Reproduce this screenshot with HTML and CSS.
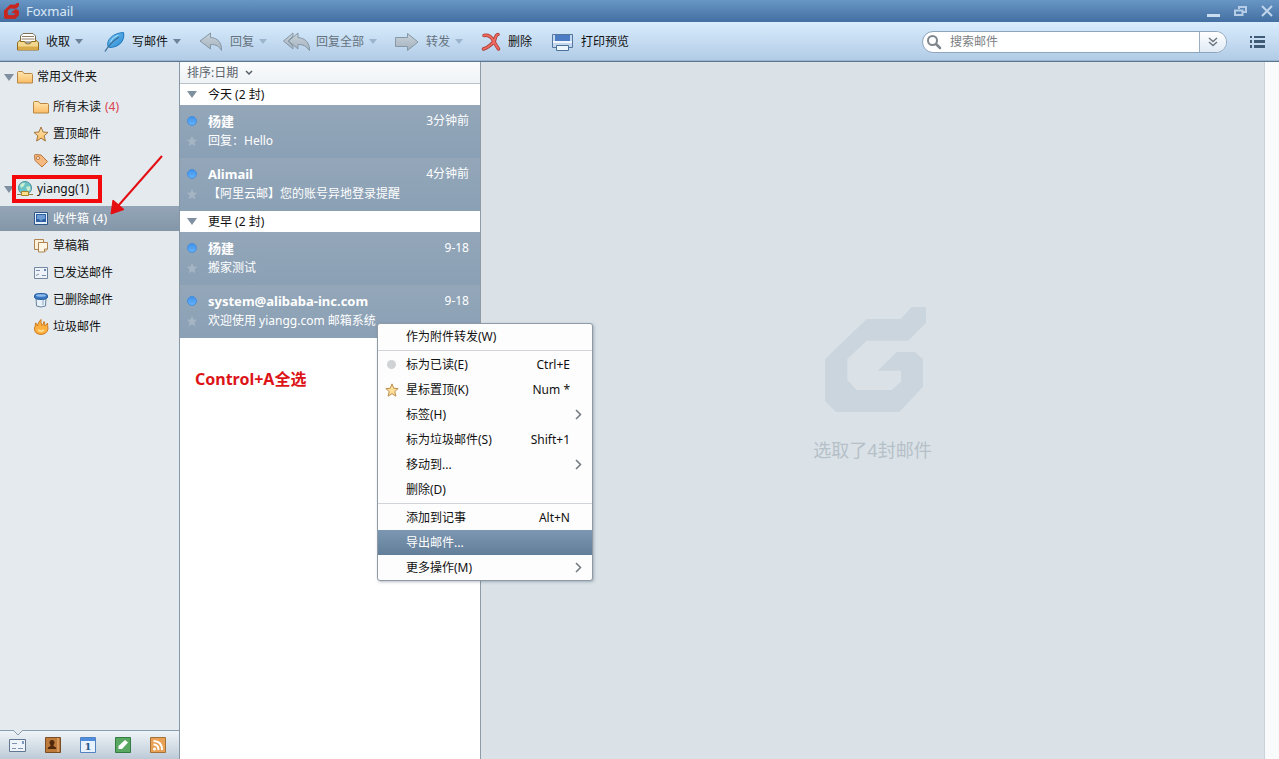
FILE: index.html
```html
<!DOCTYPE html>
<html lang="zh-CN">
<head>
<meta charset="utf-8">
<title>Foxmail</title>
<link rel="stylesheet" href="styles.css">
</head>
<body>
<svg class="defs" width="0" height="0" aria-hidden="true">
  <defs>
    <linearGradient id="gold" x1="0" y1="0" x2="0" y2="1"><stop offset="0" stop-color="#ffe6b0"/><stop offset="1" stop-color="#f9bd66"/></linearGradient>
    <linearGradient id="grey" x1="0" y1="0" x2="0" y2="1"><stop offset="0" stop-color="#c9d2d9"/><stop offset="1" stop-color="#a3b1be"/></linearGradient>
    <linearGradient id="feather" x1="0" y1="0" x2="1" y2="1"><stop offset="0" stop-color="#7cc8f5"/><stop offset="1" stop-color="#2385cf"/></linearGradient>
    <linearGradient id="dot" x1="0" y1="0" x2="0" y2="1"><stop offset="0" stop-color="#3f90ea"/><stop offset="1" stop-color="#66b4fb"/></linearGradient>
    <symbol id="star" viewBox="0 0 16 16"><path d="M8 1l2 5 5 .4-3.800 3.400L12.400 15 8 12.200 3.600 15l1.200-5.200L1 6.400 6 6z"/></symbol>
    <symbol id="folder" viewBox="0 0 16 14"><path d="M.5 13V2.500q0-1 1-1h4l1.500 2h7.500q1 0 1 1V13z" fill="url(#gold)" stroke="#b98743"/></symbol>
    <symbol id="unread" viewBox="0 0 12 12"><circle cx="6" cy="6" r="4.500" fill="url(#dot)" stroke="#4a8ed8"/></symbol>
  </defs>
</svg>
<div class="app">
  <header class="titlebar">
    <svg class="brand" viewBox="75 51 303 315"><path fill="#c8261f" stroke="#c8261f" stroke-width="16" d="M200 87H303L335 51H378V98L325 152H200L142 207V270L170 300H275L303 275V242H233L290 186H345L369 208V290L298 366H108L75 333V207Z"/></svg>
    <h1>Foxmail</h1>
    <div class="window-buttons">
      <button type="button" aria-label="最小化"><svg width="13" height="12" viewBox="0 0 13 12"><path d="M0 9h13v3H0z" fill="#c9dcf0"/></svg></button>
      <button type="button" aria-label="还原"><svg width="13" height="12" viewBox="0 0 13 12"><path d="M5 4V2h7v5H9M1 5.500h7.500V10H1z" fill="none" stroke="#b5cde6" stroke-width="2"/></svg></button>
      <button type="button" aria-label="关闭"><svg width="12" height="12" viewBox="0 0 12 12"><path d="M1 1l10 10M11 1L1 11" stroke="#c0d5eb" stroke-width="2"/></svg></button>
    </div>
  </header>

  <nav class="toolbar">
    <button type="button" class="tool">
      <svg width="22" height="20" viewBox="0 0 22 20"><path d="M3.500 10V4L6 1.500h10L18.500 4v6z" fill="#fff" stroke="#7d6a50"/><path d="M5 4.500h12M4.500 7h13" stroke="#8f7d64"/><path d="M.5 18V10.500L3.500 8v1.500h4q.5 2.500 3.500 2.500t3.500-2.500h4V8l3 2.500V18z" fill="#f3d78e" stroke="#8f6c22"/><path d="M1 14.500h20V18H1z" fill="#d9aa48"/></svg>
      <span>收取</span><i class="caret"></i>
    </button>
    <button type="button" class="tool">
      <svg width="24" height="22" viewBox="0 0 24 22"><path d="M7 15.500C5 9 12 2 22.500 1.500 24 8 20 16 9 16.500z" fill="url(#feather)" stroke="#1f78bd"/><path d="M4 20.500Q9 12 18 6" fill="none" stroke="#3b6f9b" stroke-width="1.300"/><path d="M9.500 11q2-5 8-7" fill="none" stroke="#a6defb"/></svg>
      <span>写邮件</span><i class="caret"></i>
    </button>
    <button type="button" class="tool" disabled>
      <svg width="24" height="20" viewBox="0 0 24 20"><path d="M1 9L11.500 1v4.500C19 6 23 11 22.500 18.500 20 14 17 12.500 11.500 12.500V17z" fill="url(#grey)" stroke="#8697a6"/></svg>
      <span>回复</span><i class="caret"></i>
    </button>
    <button type="button" class="tool" disabled>
      <svg class="wide" width="24" height="20" viewBox="0 0 24 20"><path d="M-1.500 9L8 1v3l-5 5 5 5v3z" fill="url(#grey)" stroke="#8697a6"/><path d="M3.500 9L13 1v4.500C20 6 25 11 24.500 18.500 21 14 18 12.500 13 12.500V17z" fill="url(#grey)" stroke="#8697a6"/></svg>
      <span>回复全部</span><i class="caret"></i>
    </button>
    <button type="button" class="tool" disabled>
      <svg width="24" height="20" viewBox="0 0 24 20"><path d="M.5 5.500h12V1.500L23 10l-10.500 8.500v-4H.5z" fill="url(#grey)" stroke="#8697a6"/></svg>
      <span>转发</span><i class="caret"></i>
    </button>
    <button type="button" class="tool">
      <svg width="20" height="20" viewBox="0 0 20 20"><g fill="none" stroke-linecap="round" stroke-linejoin="round"><path d="M3 3.500Q9 2.500 12 8t5.500 9M17 2.500q-2 0-3.500 6Q9 15 2.500 17" stroke="#a8382f" stroke-width="3.500"/><path d="M3 3.500Q9 2.500 12 8t5.500 9M17 2.500q-2 0-3.500 6Q9 15 2.500 17" stroke="#ee6a60" stroke-width="2"/></g></svg>
      <span>删除</span>
    </button>
    <button type="button" class="tool">
      <svg width="24" height="20" viewBox="0 0 24 20"><path d="M2.500 2.500h20v13h-20z" fill="#c3d7ee" stroke="#54779f"/><path d="M5 3h15v6H5z" fill="#4b7cc4"/><path d="M3 10h19" stroke="#f0f7fd" stroke-width="2"/><path d="M6.500 13.500h12v5h-12z" fill="#eef6fd" stroke="#4d7298"/></svg>
      <span>打印预览</span>
    </button>

    <form class="search" role="search">
      <label for="q"><svg width="16" height="16" viewBox="0 0 16 16"><circle cx="6.500" cy="6.500" r="4.500" fill="none" stroke="#7f868c" stroke-width="2"/><path d="M10 10l4 4" stroke="#7f868c" stroke-width="2.500" stroke-linecap="round"/></svg></label>
      <input id="q" type="search" placeholder="搜索邮件" aria-label="搜索邮件">
      <button type="button" aria-label="搜索选项"><svg width="10" height="10" viewBox="0 0 10 10"><path d="M1 1l4 3.500L9 1M1 5l4 3.500L9 5" fill="none" stroke="#6d767e" stroke-width="1.500"/></svg></button>
    </form>
    <button type="button" class="main-menu" aria-label="菜单"><svg width="15" height="12" viewBox="0 0 15 12"><path d="M0 0h2v2H0zM4 0h11v2H4zM0 4h2v3H0zM4 4h11v3H4zM0 9h2v3H0zM4 9h11v3H4z" fill="#3f5a75"/></svg></button>
  </nav>

  <div class="body">
    <aside class="sidebar">
      <div class="tree">
        <a href="#" class="branch"><i class="fold"></i><svg width="16" height="14"><use href="#folder"/></svg><span>常用文件夹</span></a>
        <ul>
          <li><a href="#"><svg width="16" height="14"><use href="#folder"/></svg>所有未读<em>(4)</em></a></li>
          <li><a href="#"><svg width="16" height="16" fill="url(#gold)" stroke="#a5763b"><use href="#star"/></svg>置顶邮件</a></li>
          <li><a href="#"><svg width="16" height="16" viewBox="0 0 16 16"><path d="M1.500 2.500q0-1 1-1L8 2l6.500 6.500-5.500 5.500L2 7.500z" fill="#f6b97f" stroke="#b8743c"/><circle cx="5" cy="5" r="1.500" fill="#fff" stroke="#b8743c"/></svg>标签邮件</a></li>
        </ul>
        <a href="#" class="branch account"><i class="fold"></i><svg width="16" height="16" viewBox="0 0 16 16"><circle cx="8" cy="7" r="6.500" fill="#6cc3c6" stroke="#4b8f9b"/><path d="M3 4q3-3 5-2l-1 3-3 2zM9 6l4-1 .5 4-3 1z" fill="#c9edd0"/><path d="M0 13.500h16" stroke="#8c7a4a"/><path d="M4.500 10.500h7v4h-7z" fill="#ffe08a" stroke="#a8842f"/></svg><span>yiangg(1)</span></a>
        <ul>
          <li class="selected"><a href="#"><svg width="16" height="16" viewBox="0 0 16 16"><path d="M1.500 1.500h13v12h-13z" fill="#e6f0fa" stroke="#2f5688"/><path d="M3 3h10v8H3z" fill="#2c5fa3"/><path d="M4 4h8v4h-2l-1 1.500H7L6 8H4z" fill="#6d9bd4"/></svg>收件箱<em>(4)</em></a></li>
          <li><a href="#"><svg width="16" height="16" viewBox="0 0 16 16"><path d="M1.500 1.500h9v10h-9z" fill="#fdf0da" stroke="#b08452"/><path d="M5.500 4.500h9V11l-3 3h-6z" fill="#fff5e4" stroke="#b08452"/><path d="M14.500 11h-3v3" fill="none" stroke="#b08452"/></svg>草稿箱</a></li>
          <li><a href="#"><svg width="16" height="14" viewBox="0 0 16 14"><path d="M1.500 1.500h13v11h-13z" fill="#eef3fa" stroke="#7588a0"/><path d="M3 4.500h4M3 9.500l3-1.500M9 9.500h4" stroke="#7d90ab"/><path d="M11 3h2v2h-2z" fill="#6587b5"/></svg>已发送邮件</a></li>
          <li><a href="#"><svg width="16" height="16" viewBox="0 0 16 16"><path d="M3 5l.5 9q4.500 2 9 0L13 5z" fill="#e9f1f8" stroke="#66829f"/><path d="M9 8h2v5H9z" fill="#b9cde0"/><path d="M1.500 3.500q0-2 6.500-2t6.500 2v2q-1 2-6.500 2t-6.500-2z" fill="#3877c2" stroke="#255c9f"/><ellipse cx="8" cy="3.500" rx="5" ry="1.200" fill="#8fbdec"/></svg>已删除邮件</a></li>
          <li><a href="#"><svg width="16" height="16" viewBox="0 0 16 16"><path d="M2.500 4q2 1 2 3Q5 3 8 .5q-.5 3 1 6 1.500-1 2-4Q12 5 12 7q1.500-1 2.500-3 0 2 .5 6-1 5-7 5.500Q1 15 1.500 9q1-2 1-5z" fill="#fbb040" stroke="#cf7a1e"/><path d="M5 11q3 2 6 0" fill="none" stroke="#ffdc8c" stroke-width="2"/></svg>垃圾邮件</a></li>
        </ul>
      </div>
      <div class="switcher">
        <svg class="notch" width="12" height="6" viewBox="0 0 12 6"><path d="M1 0l5 5 5-5" fill="#e4eaee" stroke="#8b9db0"/></svg>
        <button type="button" aria-label="邮件"><svg width="18" height="16" viewBox="0 0 18 16"><path d="M.5 2.500h16v12H.5z" fill="#eff4fa" stroke="#5f7791"/><path d="M3 6.500h5M3 11.500h4M9 11.500h5" stroke="#7f93ac"/><path d="M13 4h2v3h-2z" fill="#7f9cc0"/></svg></button>
        <button type="button" aria-label="联系人"><svg width="18" height="16" viewBox="0 0 18 16"><path d="M1.500.5h15v15h-15z" fill="#bd7b3b" stroke="#7c4c22"/><path d="M14 1v14" stroke="#f0b980"/><circle cx="8" cy="5.500" r="2.500" fill="#50290d"/><path d="M3.500 12q0-2 3-3V7h3v2q3 1 3 3z" fill="#50290d"/></svg></button>
        <button type="button" class="day" aria-label="日历"><svg width="18" height="16" viewBox="0 0 18 16"><path d="M1.500.5h15v15h-15z" fill="#e8f2fd" stroke="#5283be"/><path d="M2 1h14v3H2z" fill="#4e8ddd"/></svg><span>1</span></button>
        <button type="button" aria-label="记事"><svg width="18" height="16" viewBox="0 0 18 16"><path d="M1.500.5h15v15h-15z" fill="#58a862" stroke="#347b42"/><path d="M4.500 12V9L11 3l3 2.500L8 12z" fill="#fff"/></svg></button>
        <button type="button" aria-label="订阅"><svg width="18" height="16" viewBox="0 0 18 16"><path d="M1.500.5h15v15h-15z" fill="#e8a155" stroke="#a5713a"/><path d="M4.500 4Q13 4 13 13M4.500 7.500Q9.500 7.500 9.500 13" fill="none" stroke="#fff" stroke-width="2"/><circle cx="5.500" cy="12" r="1.500" fill="#fff"/></svg></button>
      </div>
      <svg class="arrow" width="56" height="62" viewBox="0 0 56 62"><path d="M53 2L9 52" stroke="#e40d12" stroke-width="2"/><path d="M2 60L4 46 15 55.500z" fill="#e40d12" stroke="#e40d12"/></svg>
    </aside>

    <section class="list">
      <button type="button" class="sort"><span>排序:日期</span><svg width="8" height="6" viewBox="0 0 8 6"><path d="M1 1l3 3 3-3" fill="none" stroke="#555e66" stroke-width="1.500"/></svg></button>
      <h2><i class="fold"></i>今天 (2 封)</h2>
      <article class="mail">
        <svg width="12" height="12"><use href="#unread"/></svg><strong>杨建</strong><time>3分钟前</time>
        <svg class="dim" width="12" height="12"><use href="#star"/></svg><p>回复：Hello</p>
      </article>
      <article class="mail">
        <svg width="12" height="12"><use href="#unread"/></svg><strong>Alimail</strong><time>4分钟前</time>
        <svg class="dim" width="12" height="12"><use href="#star"/></svg><p>【阿里云邮】您的账号异地登录提醒</p>
      </article>
      <h2><i class="fold"></i>更早 (2 封)</h2>
      <article class="mail">
        <svg width="12" height="12"><use href="#unread"/></svg><strong>杨建</strong><time>9-18</time>
        <svg class="dim" width="12" height="12"><use href="#star"/></svg><p>搬家测试</p>
      </article>
      <article class="mail">
        <svg width="12" height="12"><use href="#unread"/></svg><strong>system@alibaba-inc.com</strong><time>9-18</time>
        <svg class="dim" width="12" height="12"><use href="#star"/></svg><p>欢迎使用 yiangg.com 邮箱系统</p>
      </article>
      <p class="note">Control+A全选</p>

      <div class="menu" role="menu">
        <button type="button" role="menuitem"><span>作为附件转发(W)</span></button>
        <hr>
        <button type="button" role="menuitem"><i class="mark"></i><span>标为已读(E)</span><kbd>Ctrl+E</kbd></button>
        <button type="button" role="menuitem"><svg class="mark" width="14" height="14" fill="#ffe09a" stroke="#b5803a"><use href="#star"/></svg><span>星标置顶(K)</span><kbd>Num *</kbd></button>
        <button type="button" role="menuitem"><span>标签(H)</span><svg class="more" width="7" height="11" viewBox="0 0 7 11"><path d="M1 1l4.500 4.500L1 10"/></svg></button>
        <button type="button" role="menuitem"><span>标为垃圾邮件(S)</span><kbd>Shift+1</kbd></button>
        <button type="button" role="menuitem"><span>移动到...</span><svg class="more" width="7" height="11" viewBox="0 0 7 11"><path d="M1 1l4.500 4.500L1 10"/></svg></button>
        <button type="button" role="menuitem"><span>删除(D)</span></button>
        <hr>
        <button type="button" role="menuitem"><span>添加到记事</span><kbd>Alt+N</kbd></button>
        <button type="button" role="menuitem" class="active"><span>导出邮件...</span></button>
        <button type="button" role="menuitem"><span>更多操作(M)</span><svg class="more" width="7" height="11" viewBox="0 0 7 11"><path d="M1 1l4.500 4.500L1 10"/></svg></button>
      </div>
    </section>

    <main class="reader">
      <svg width="106" height="105" viewBox="60 51 318 315"><path fill="#cbd5dd" d="M200 87H303L335 51H378V98L325 152H200L142 207V270L170 300H275L303 275V242H233L290 186H345L369 208V290L298 366H108L75 333V207Z"/></svg>
      <p>选取了4封邮件</p>
    </main>
    <div class="gutter"></div>
  </div>
</div>
</body>
</html>
```

FILE: styles.css
```css
*, *::after { box-sizing: border-box; }
body { margin: 0; font: 12px/16px "Noto Sans", "Noto Sans CJK SC", sans-serif; color: #111; }
button { font: inherit; color: inherit; background: none; border: 0; padding: 0; }
a { color: inherit; text-decoration: none; }
h1, h2, p, ul { margin: 0; padding: 0; font-weight: normal; }
ul { list-style: none; }
svg { display: block; flex: none; }
.defs { position: absolute; }
.app { height: 100vh; display: flex; flex-direction: column; overflow: hidden; }

.titlebar { flex: none; height: 22px; padding: 0 6px 1px 4px; display: flex; align-items: center; gap: 7px; background: linear-gradient(#6896c4, #436fa2); }
.brand { width: 15px; height: 16px; }
.titlebar h1 { font-size: 13px; line-height: 20px; color: #dbe9f7; }
.window-buttons { margin-left: auto; display: flex; gap: 14px; }

.toolbar { flex: none; height: 40px; padding: 0 14px 0 17px; display: flex; align-items: center; gap: 18px; background: linear-gradient(#d8ecfc, #b1cbe6); border-bottom: 1px solid #5c7590; box-shadow: inset 0 -1px #9bb4cd; }
.tool { display: flex; align-items: center; gap: 7px; white-space: nowrap; }
.tool:disabled { color: #66727d; }
.caret, .fold { flex: none; border: 4px solid transparent; border-top: 5px solid #6d8399; border-bottom: 0; }
.tool .caret { margin-left: -2px; }
.tool:disabled .caret { border-top-color: #9db5cc; }
.wide { overflow: visible; }
.search { margin-left: auto; width: 305px; height: 22px; display: flex; align-items: center; background: #fff; border: 1px solid #8ea5bc; border-radius: 11px; overflow: hidden; }
.search label { margin-left: 3px; }
.search input { flex: 1; min-width: 0; padding: 0 8px; border: 0; outline: 0; background: none; font: inherit; }
.search input::placeholder { color: #7c8083; }
.search button { width: 27px; height: 100%; display: grid; place-items: center; background: linear-gradient(#fff, #e0eaf4); border-left: 1px solid #9aafc4; }
.main-menu { margin-left: 5px; }

.body { flex: 1; min-height: 0; display: flex; }
.sidebar { position: relative; flex: none; width: 180px; display: flex; flex-direction: column; background: #e4eaee; border-right: 1px solid #8897a6; }
.tree { flex: 1; }
.tree ul { padding: 2px 0 1px; display: grid; gap: 2px; }
.branch { position: relative; height: 30px; padding-left: 4px; display: flex; align-items: center; gap: 4px; }
.fold { border-width: 7px 5px 0; border-top-color: #8090a0; }
.branch .fold { margin-right: -1px; }
.account::after { content: ""; position: absolute; left: 12px; top: 1px; width: 90px; height: 28px; border: 4px solid #f3080c; }
.tree li a { height: 25px; padding-left: 33px; display: flex; align-items: center; gap: 4px; }
.tree em { font-style: normal; color: #dc4350; }
.tree li.selected, .tree .selected em { color: #fff; }
.tree .selected { background: linear-gradient(#93a5b6, #8497a9); }
.arrow { position: absolute; left: 109px; top: 92px; }
.switcher { position: relative; flex: none; height: 29px; padding-left: 9px; display: flex; align-items: center; gap: 17px; background: linear-gradient(#eff4f8, #bdcbd7); border-top: 1px solid #8b9db0; }
.notch { position: absolute; left: 12px; top: -1px; }
.day { position: relative; }
.day span { position: absolute; left: 0; right: 0; top: 4px; font: bold 10px/12px "DejaVu Serif", serif; color: #27598f; }

.list { position: relative; flex: none; width: 301px; background: #fff; border-right: 1px solid #8e9aa5; }
.sort { width: 100%; height: 22px; padding: 0 7px; display: flex; align-items: center; gap: 7px; color: #5b646b; background: linear-gradient(#fbfcfd, #eef2f5); border-bottom: 1px solid #b9c2ca; }
.list h2 { height: 21px; padding-left: 7px; display: flex; align-items: center; gap: 11px; font-size: 12px; }
.mail { height: 53px; padding: 6px 11px 7px 6px; display: grid; grid-template-columns: 12px 1fr auto; grid-template-rows: 20px 20px; column-gap: 10px; align-items: center; color: #fff; background: linear-gradient(#94a7b9, #8aa0b5); }
.mail strong { font-size: 13px; }
.mail p { grid-column: 2 / 4; white-space: nowrap; }
.dim { fill: #a6b5c4; }
.note { margin: 31px 0 0 15px; font-size: 16px; line-height: 20px; font-weight: bold; color: #dc1418; }

.menu { position: absolute; z-index: 2; left: 197px; top: 261px; width: 216px; background: #fdfdfd; border: 1px solid #8f9aa4; border-radius: 3px; box-shadow: 1px 1px 3px rgba(50, 70, 90, .35); }
.menu button { position: relative; width: 100%; height: 25px; padding: 0 22px 0 28px; display: flex; align-items: center; justify-content: space-between; }
.menu hr { height: 1px; margin: 1px 0; border: 0; background: #d0d4d8; }
.menu kbd { font: inherit; }
.menu .mark { position: absolute; left: 7px; }
.menu i.mark { left: 9px; width: 9px; height: 9px; border-radius: 50%; background: #d0d3d5; }
.menu .more { position: absolute; right: 10px; fill: none; stroke: #73797e; stroke-width: 1.5; }
.menu .active { color: #fff; background: linear-gradient(#7c97b1, #637e99); }

.reader { flex: 1; padding-bottom: 52px; display: flex; flex-direction: column; align-items: center; justify-content: center; gap: 26px; background: #dae2e7; }
.reader p { font-size: 18px; line-height: 24px; color: #b6c0c8; }
.gutter { flex: none; width: 15px; background: #f9fafb; border-left: 1px solid #ccd3d8; }
```
